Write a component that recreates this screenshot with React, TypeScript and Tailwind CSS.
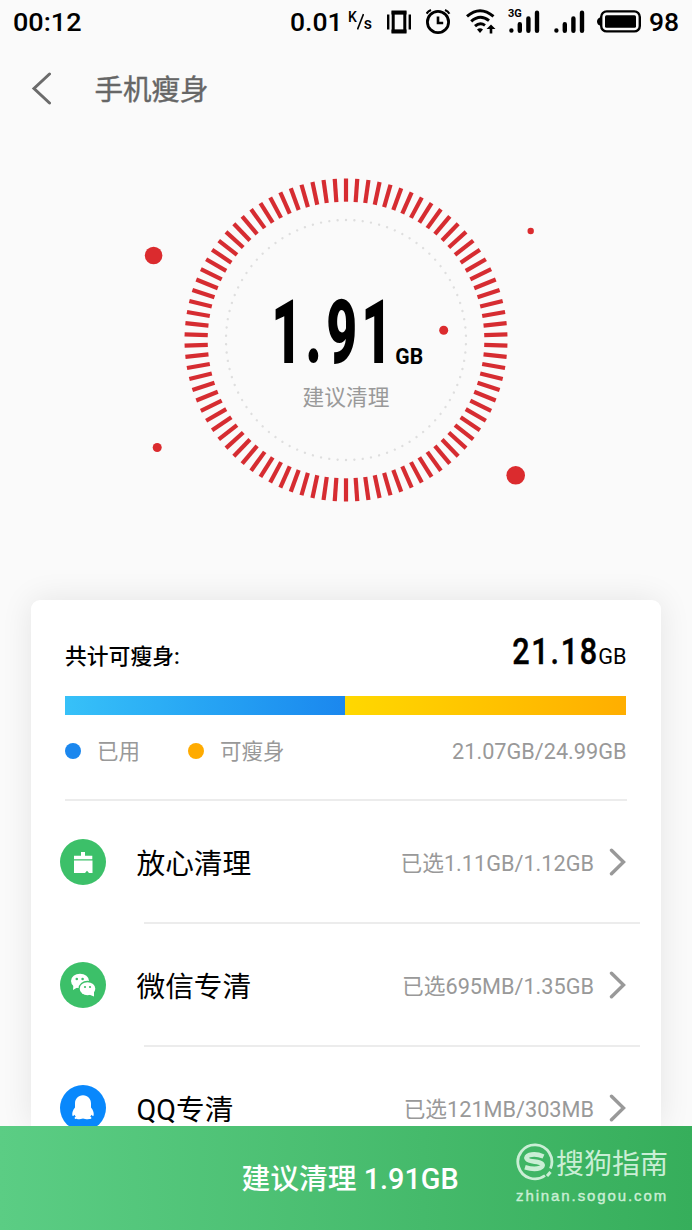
import React from "react";

const TICKS = Array.from({ length: 90 }, (_, i) => i * 4);

const CJK = "font-['Roboto','Noto_Sans_CJK_SC',sans-serif]";

function StatusBar() {
  return (
    <div className="flex h-11 shrink-0 items-center pl-[13px] text-[26.5px] font-medium leading-[44px] text-black">
      <span className="w-[277px] whitespace-nowrap">
        <span className="inline-block origin-left scale-x-[1.02]">00:12</span>
      </span>
      <span className="w-[58px] whitespace-nowrap">0.01</span>
      <span className="flex w-[39px] text-[16px] leading-none">
        <span className="-mt-[1px] text-[14px]">K</span>
        <svg className="h-[22px] w-[7px]" viewBox="0 0 7 22">
          <path d="M6.500 3L.5 18.500" stroke="#000" strokeWidth="1.6" />
        </svg>
        <span className="mt-[5px]">s</span>
      </span>
      <svg className="h-[24px] w-[39px]" viewBox="0 0 39 24">
        <path d="M6.2 2.7h11.6v18.6H6.2z" fill="none" stroke="#000" strokeWidth="3" />
        <path d="M4.5 .5h15v4h-15zM4.5 19.500h15v4h-15z" />
        <path d="M1.2 4.500v15M22.8 4.500v15" stroke="#000" strokeWidth="2.4" />
      </svg>
      <svg className="h-[26px] w-[40px]" viewBox="0 0 40 26" fill="none" stroke="#000">
        <circle cx="12" cy="13" r="10.6" strokeWidth="2.8" />
        <path d="M12 7.500v6.500h5.2" strokeWidth="2.6" />
        <path d="M.6 4.700Q2 2.300 5 1.100M23.4 4.700Q22 2.300 19 1.100" strokeWidth="2.2" />
      </svg>
      <svg className="h-[26px] w-[43px]" viewBox="0 0 43 26" fill="none" stroke="#000" strokeWidth="3">
        <path d="M1 7.400Q14 -4 27.5 7.400" />
        <path d="M5.2 12.400Q14 4.500 23 11.600" />
        <path d="M9 17.200Q14 12.800 19 16.400" />
        <path d="M14 24l-3-3.6q3-2.2 6 0z" fill="#000" stroke="none" />
        <path d="M25 15.500l-4.5 4.500h3.2v4.500h2.600v-4.500h3.200z" fill="#000" stroke="none" />
      </svg>
      <span className="relative flex w-[45px] items-center">
        <svg className="h-[26px] w-[45px]" viewBox="0 0 45 26" stroke="#000" strokeLinecap="round" strokeWidth="4.4">
          <path d="M2.4 21.400v.2M10.8 15.200v6.600M19.4 9.500v12.300M28 3.800v18" />
        </svg>
        <span className="absolute -left-px -top-[2px] text-[11px] font-bold leading-[14px]">3G</span>
      </span>
      <svg className="h-[26px] w-[43px]" viewBox="0 0 43 26" stroke="#000" strokeLinecap="round" strokeWidth="4.4">
        <path d="M2.4 21.400v.2M10.8 15.200v6.600M19.4 9.500v12.300M28 3.800v18" />
      </svg>
      <svg className="mb-[1px] h-[23px] w-[52px]" viewBox="0 0 52 23">
        <rect x="4.2" y="1.4" width="38.6" height="20" rx="5.5" fill="none" stroke="#000" strokeWidth="2.4" />
        <path d="M4 7v9Q0 15 0 11.5T4 7z" />
        <rect x="8" y="5.2" width="31" height="12.6" rx="1.5" />
      </svg>
      <span className="whitespace-nowrap">98</span>
    </div>
  );
}

function Digit({ value, w }: { value: string; w: string }) {
  return (
    <span className={`flex justify-center ${w}`}>
      <span className="scale-x-[0.6]">{value}</span>
    </span>
  );
}

function Gauge() {
  return (
    <div className="relative h-[466px] w-full shrink-0">
      <svg className="h-[466px] w-[692px]" viewBox="0 134 692 466">
        {TICKS.map((a) => (
          <path key={a} d="M346 178.5v23.200" stroke="#d62c31" strokeWidth="4.200" transform={`rotate(${a} 346 340)`} />
        ))}
        {TICKS.map((a) => (
          <circle key={a} cx="346" cy="220" r="1.2" fill="#dedede" transform={`rotate(${a} 346 340)`} />
        ))}
        <g fill="#db2b2e">
          <circle cx="153.6" cy="255.5" r="8.8" />
          <circle cx="530.7" cy="231" r="3.2" />
          <circle cx="443.7" cy="330.3" r="4.5" />
          <circle cx="157.2" cy="447.5" r="4.5" />
          <circle cx="515.7" cy="475.3" r="9.3" />
        </g>
      </svg>
      <div className="absolute inset-x-0 top-[154px] flex flex-col items-center">
        <div className="flex h-[90px] w-[150px] items-end text-black">
          <div className="flex w-[124px] shrink-0 text-[89px] font-black leading-[90px]">
            <Digit w="w-[31px]" value="1" />
            <Digit w="w-[23px]" value="." />
            <Digit w="w-[34px]" value="9" />
            <Digit w="w-[36px]" value="1" />
          </div>
          <span className="pb-[8px] text-[21.500px] font-bold leading-[26px]">
            <span className="inline-block scale-x-[0.98]">GB</span>
          </span>
        </div>
        <span className="mt-[4px] text-[21.700px] leading-[32px] text-[#999]">建议清理</span>
      </div>
    </div>
  );
}

function BroomIcon() {
  return (
    <svg className="size-[46px]" viewBox="0 0 46 46">
      <circle cx="23" cy="23" r="23" fill="#3cc069" />
      <path fill="#fff" d="M21 13h4v3.700h7.300v3.500H14v-3.500h7zM14 21.500h18.500V34h-3.500l-2-2.300-2 2.300H14z" />
    </svg>
  );
}

function WechatIcon() {
  return (
    <svg className="size-[46px]" viewBox="0 0 46 46">
      <circle cx="23" cy="23" r="23" fill="#3cc069" />
      <ellipse cx="20" cy="19" rx="9" ry="7.300" fill="#fff" />
      <path d="M13.500 22l-.5 6 5-3z" fill="#fff" />
      <ellipse cx="27.500" cy="26.700" rx="9" ry="8" fill="#3cc069" />
      <ellipse cx="27.500" cy="26.700" rx="7.800" ry="6.500" fill="#fff" />
      <path d="M34 29v5.400l-5-2z" fill="#fff" />
      <g fill="#3cc069">
        <circle cx="16.800" cy="17" r="1.300" />
        <circle cx="22.600" cy="17" r="1.300" />
        <circle cx="25" cy="25" r="1.100" />
        <circle cx="30" cy="25" r="1.100" />
      </g>
    </svg>
  );
}

function PenguinIcon() {
  return (
    <svg className="size-[46px]" viewBox="0 0 46 46">
      <circle cx="23" cy="23" r="23" fill="#0988fc" />
      <path
        fill="#fff"
        d="M23 10.300c-5 0-8 3.700-8 8.200v4c-2 2.400-3 5-2.700 7.500.2 1.500 1 1.200 2.200-.3.300.8.800 1.500 1.300 2-1 .4-1.300.900-1.300 1.400 0 1.500 6 1.500 8.500.4 2.500 1.100 8.500 1.100 8.500-.4 0-.5-.3-1-1.300-1.400.5-.5 1-1.200 1.300-2 1.200 1.500 2 1.800 2.200.3.300-2.500-.7-5.100-2.700-7.500v-4c0-4.500-3-8.200-8-8.200z"
      />
    </svg>
  );
}

type RowProps = { icon: React.ReactNode; title: string; detail: string; line?: boolean };

function Row({ icon, title, detail, line = true }: RowProps) {
  return (
    <div className="flex h-[123px] flex-col">
      <div className="flex h-[122px] items-center pl-[28.500px] pr-[35px]">
        {icon}
        <span className="ml-[31px] flex-1 pt-[4px] text-[28.700px] leading-[40px] text-black">{title}</span>
        <span className="pt-[4px] text-[21.700px] leading-[32px] text-[#999]">{detail}</span>
        <svg className="ml-[15px] h-[28px] w-[17px]" viewBox="0 0 17 28">
          <path d="M2.500 2.200L14.500 14 2.500 25.800" fill="none" stroke="#999" strokeWidth="3.400" strokeLinecap="round" />
        </svg>
      </div>
      {line && <div className="ml-[113px] mr-[21px] h-[2px] bg-[#ececec]" />}
    </div>
  );
}

function Card() {
  return (
    <div className="mx-auto h-[526px] w-[630px] shrink-0 rounded-t-[9px] bg-white shadow-[0_0_32px_rgba(0,0,0,0.09)]">
      <div className="ml-[34px] mr-[34.500px] flex h-[201px] flex-col border-b-2 border-[#ececec] text-black">
        <div className="mt-[31px] flex h-[45px] items-baseline justify-between">
          <span className="text-[21.800px] font-medium leading-[45px]">共计可瘦身:</span>
          <span className="flex items-baseline">
            <span className="origin-right scale-x-[0.85] text-[36px] font-medium leading-[42px] tracking-[2px] [-webkit-text-stroke:0.400px_#000]">
              21.18
            </span>
            <span className="-ml-px text-[21.700px]">GB</span>
          </span>
        </div>
        <div className="mt-[20px] flex h-[19px] shrink-0">
          <div className="w-[280px] bg-linear-to-r from-[#37c1f8] to-[#1b87ee]" />
          <div className="mr-px flex-1 bg-linear-to-r from-[#ffd800] to-[#ffae00]" />
        </div>
        <div className="mt-[20px] flex h-8 items-center text-[21.500px] leading-8 text-[#999]">
          <span className="size-4 rounded-full bg-[#1b87ee]" />
          <span className="ml-4 w-[91px] pt-[2px]">已用</span>
          <span className="size-4 rounded-full bg-[#ffab00]" />
          <span className="ml-4 flex-1 pt-[2px]">可瘦身</span>
          <span className="pt-[2px] text-[21.700px]">21.07GB/24.99GB</span>
        </div>
      </div>
      <Row icon={<BroomIcon />} title="放心清理" detail="已选1.11GB/1.12GB" />
      <Row icon={<WechatIcon />} title="微信专清" detail="已选695MB/1.35GB" />
      <Row icon={<PenguinIcon />} title="QQ专清" detail="已选121MB/303MB" line={false} />
    </div>
  );
}

function Watermark() {
  return (
    <div className="absolute left-[516px] top-[17px] flex w-[160px] flex-col text-[#caeed5]">
      <div className="flex h-[38px] items-center">
        <svg className="h-[38px] w-[38px]" viewBox="0 0 38 38" fill="none" stroke="currentColor">
          <path d="M29 32.500A17 17 0 1 1 34.500 25.500" strokeWidth="2.800" />
          <path d="M31 33l3.500-4" strokeWidth="3" />
          <path d="M27.500 13.500Q20 10.300 13.500 12C8 14 10 17.800 18.500 18.600S29 22.500 24 25Q18 27 9 24.200" strokeWidth="4.600" />
        </svg>
        <span className="ml-[2px] mt-[5px] whitespace-nowrap text-[28px] font-normal leading-[38px]">搜狗指南</span>
      </div>
      <span className="mt-[6px] whitespace-nowrap font-['Liberation_Sans',sans-serif] text-[15px] font-normal leading-[18px] tracking-[1.900px] [-webkit-text-stroke:0.400px_currentColor]">
        zhinan.sogou.com
      </span>
    </div>
  );
}

export default function App() {
  return (
    <div lang="zh-CN" className={`flex h-[1230px] w-[692px] flex-col overflow-hidden bg-[#fafafa] ${CJK}`}>
      <StatusBar />
      <header className="flex h-[90px] shrink-0 items-center pl-[31px]">
        <svg className="h-[34px] w-[20px]" viewBox="0 0 20 34">
          <path d="M18.500 2L3 16.500 18.500 31" fill="none" stroke="#6b6b6b" strokeWidth="3" strokeLinecap="round" />
        </svg>
        <h1 className="ml-[43.500px] pt-[3px] text-[28.500px] font-normal leading-[40px] text-[#666] [-webkit-text-stroke:0.400px_#666]">手机瘦身</h1>
      </header>
      <Gauge />
      <Card />
      <button className="relative flex h-[104px] w-full shrink-0 items-center justify-center bg-linear-to-r from-[#5bcd84] to-[#36ae5b] pl-[8px] pt-[3px] text-left text-[28.800px] font-medium text-white">
        建议清理 1.91GB
        <Watermark />
      </button>
    </div>
  );
}
